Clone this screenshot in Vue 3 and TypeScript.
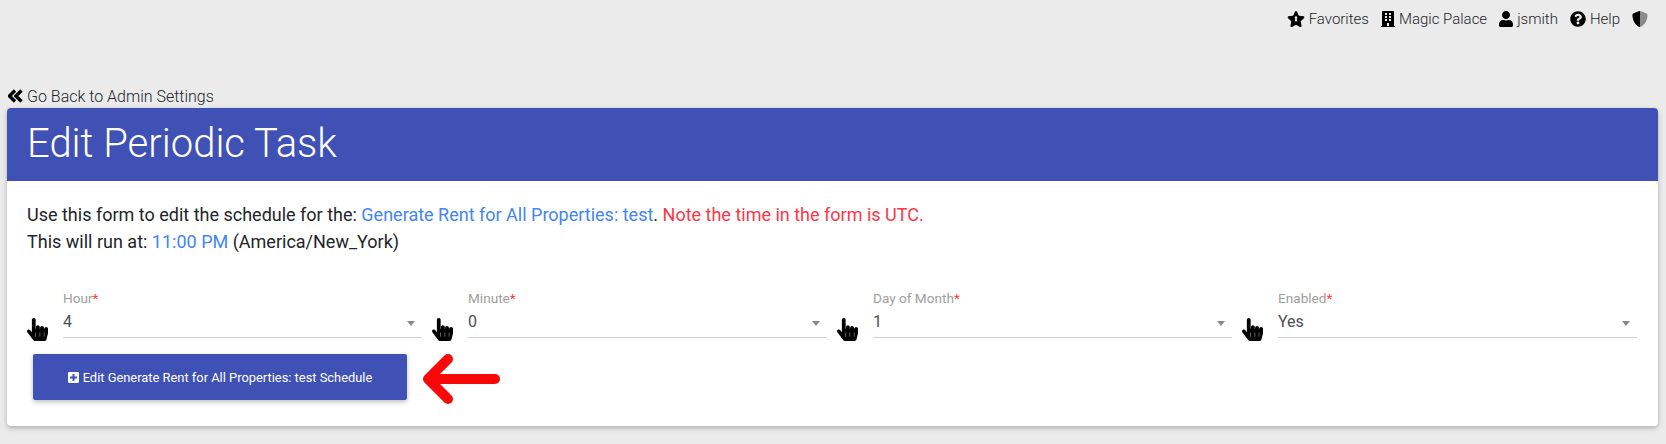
<script setup lang="ts">
interface Field {
  label: string
  value: string
}

const fields: Field[] = [
  { label: 'Hour', value: '4' },
  { label: 'Minute', value: '0' },
  { label: 'Day of Month', value: '1' },
  { label: 'Enabled', value: 'Yes' },
]

const handPath =
  'M448 240v96c0 3.084-.356 6.159-1.063 9.162l-32 136C410.686 499.23 394.562 512 376 512H168a40.004 40.004 0 0 1-32.35-16.473l-127.997-176c-12.993-17.866-9.043-42.883 8.822-55.876 17.867-12.994 42.884-9.043 55.877 8.823L104 315.992V40c0-22.091 17.908-40 40-40s40 17.909 40 40v200h8v-40c0-22.091 17.908-40 40-40s40 17.909 40 40v40h8v-24c0-22.091 17.908-40 40-40s40 17.909 40 40v24h8c0-22.091 17.908-40 40-40s40 17.909 40 40zm-256 80h-8v96h8v-96zm88 0h-8v96h8v-96zm88 0h-8v96h8v-96z'
</script>

<template>
  <div class="page">
    <nav class="topbar">
      <a class="top-link">
        <svg class="top-icon star" viewBox="0 0 576 512">
          <path d="M259.3 17.8L194 150.2 47.9 171.5c-26.2 3.8-36.7 36.1-17.7 54.6l105.7 103-25 145.5c-4.5 26.3 23.2 46 46.4 33.7L288 439.6l130.7 68.7c23.2 12.2 50.9-7.4 46.4-33.7l-25-145.5 105.7-103c19-18.5 8.5-50.8-17.7-54.6L382 150.2 316.7 17.8c-11.7-23.6-45.6-23.9-57.4 0z" />
          <path fill="#ebebeb" d="M288 170a42 42 0 0 1 24 76l14 84h-76l14-84a42 42 0 0 1 24-76z" />
        </svg>
        Favorites
      </a>
      <a class="top-link">
        <svg class="top-icon" viewBox="0 0 448 512">
          <path d="M436 480h-20V24c0-13.255-10.745-24-24-24H56C42.745 0 32 10.745 32 24v456H12c-6.627 0-12 5.373-12 12v20h448v-20c0-6.627-5.373-12-12-12zM128 76c0-6.627 5.373-12 12-12h40c6.627 0 12 5.373 12 12v40c0 6.627-5.373 12-12 12h-40c-6.627 0-12-5.373-12-12V76zm0 96c0-6.627 5.373-12 12-12h40c6.627 0 12 5.373 12 12v40c0 6.627-5.373 12-12 12h-40c-6.627 0-12-5.373-12-12v-40zm52 148h-40c-6.627 0-12-5.373-12-12v-40c0-6.627 5.373-12 12-12h40c6.627 0 12 5.373 12 12v40c0 6.627-5.373 12-12 12zm76 160h-64v-84c0-6.627 5.373-12 12-12h40c6.627 0 12 5.373 12 12v84zm64-172c0 6.627-5.373 12-12 12h-40c-6.627 0-12-5.373-12-12v-40c0-6.627 5.373-12 12-12h40c6.627 0 12 5.373 12 12v40zm0-96c0 6.627-5.373 12-12 12h-40c-6.627 0-12-5.373-12-12v-40c0-6.627 5.373-12 12-12h40c6.627 0 12 5.373 12 12v40zm0-96c0 6.627-5.373 12-12 12h-40c-6.627 0-12-5.373-12-12V76c0-6.627 5.373-12 12-12h40c6.627 0 12 5.373 12 12v40z" />
        </svg>
        Magic Palace
      </a>
      <a class="top-link">
        <svg class="top-icon" viewBox="0 0 448 512">
          <path d="M224 256c70.7 0 128-57.3 128-128S294.7 0 224 0 96 57.3 96 128s57.3 128 128 128zm89.6 32h-16.7c-22.2 10.2-46.9 16-72.9 16s-50.6-5.8-72.9-16h-16.7C60.2 288 0 348.2 0 422.4V464c0 26.5 21.5 48 48 48h352c26.5 0 48-21.5 48-48v-41.6c0-74.2-60.2-134.4-134.4-134.4z" />
        </svg>
        jsmith
      </a>
      <a class="top-link">
        <svg class="top-icon" viewBox="0 0 512 512">
          <path d="M504 256c0 136.997-111.043 248-248 248S8 392.997 8 256C8 119.083 119.043 8 256 8s248 111.083 248 248zM262.655 90c-54.497 0-89.255 22.957-116.549 63.758-3.536 5.286-2.353 12.415 2.715 16.258l34.699 26.31c5.205 3.947 12.621 3.008 16.665-2.122 17.864-22.658 30.113-35.797 57.303-35.797 20.429 0 45.698 13.148 45.698 32.958 0 14.976-12.363 22.667-32.534 33.976C247.128 238.528 216 254.941 216 296v4c0 6.627 5.373 12 12 12h56c6.627 0 12-5.373 12-12v-1.333c0-28.462 83.186-29.647 83.186-106.667 0-58.002-60.165-102-116.531-102zM256 338c-25.365 0-46 20.635-46 46 0 25.364 20.635 46 46 46s46-20.636 46-46c0-25.365-20.635-46-46-46z" />
        </svg>
        Help
      </a>
      <svg class="top-icon shield" viewBox="0 0 512 512">
        <path fill="#8a8a8a" d="M466.5 83.7l-192-80a48.15 48.15 0 0 0-36.9 0l-192 80C27.7 91.1 16 108.6 16 128c0 198.5 114.5 335.7 221.5 380.3 11.8 4.9 25.1 4.9 36.9 0C360.1 472.6 496 349.3 496 128c0-19.4-11.7-36.9-29.5-44.3z" />
        <path d="M256 0.1a48 48 0 0 0-18.4 3.6l-192 80C27.7 91.1 16 108.6 16 128c0 198.5 114.5 335.7 221.5 380.3 6 2.5 12.2 3.7 18.5 3.7z" />
      </svg>
    </nav>

    <a class="back-link">
      <svg class="back-icon" viewBox="1 0 14 14">
        <path d="M7.5 1.5 2 7l5.5 5.5M14 1.5 8.5 7l5.5 5.5" />
      </svg>
      Go Back to Admin Settings
    </a>

    <section class="card">
      <header class="card-header">
        <h1>Edit Periodic Task</h1>
      </header>
      <div class="card-body">
        <p class="intro">
          Use this form to edit the schedule for the:
          <span class="blue">Generate Rent for All Properties: test</span>.
          <span class="red">Note the time in the form is UTC.</span>
        </p>
        <p class="intro">
          This will run at: <span class="blue">11:00 PM</span> (America/New_York)
        </p>

        <div class="fields">
          <div v-for="field in fields" :key="field.label" class="field-wrap">
            <svg class="hand" viewBox="0 0 448 512" preserveAspectRatio="none">
              <path :d="handPath" />
            </svg>
            <div class="field">
              <label>{{ field.label }}<span class="req">*</span></label>
              <div class="select">
                <span>{{ field.value }}</span>
                <i class="caret"></i>
              </div>
            </div>
          </div>
        </div>

        <div class="actions">
          <button class="btn" type="button">
            <svg class="plus" viewBox="0 32 448 448">
              <path d="M400 32H48C21.5 32 0 53.5 0 80v352c0 26.5 21.5 48 48 48h352c26.5 0 48-21.5 48-48V80c0-26.5-21.5-48-48-48zm-32 252c0 6.6-5.4 12-12 12h-92v92c0 6.6-5.4 12-12 12h-56c-6.6 0-12-5.4-12-12v-92H92c-6.6 0-12-5.4-12-12v-56c0-6.6 5.4-12 12-12h92v-92c0-6.6 5.4-12 12-12h56c6.6 0 12 5.4 12 12v92h92c6.6 0 12 5.4 12 12v56z" />
            </svg>
            Edit Generate Rent for All Properties: test Schedule
          </button>
          <svg class="arrow" viewBox="0 0 80 50">
            <path d="M72 25H6M25 5 5 25l20 20" />
          </svg>
        </div>
      </div>
    </section>
  </div>
</template>

<style>
html,
body {
  margin: 0;
  background: #ebebeb;
}
</style>

<style scoped>
.page {
  height: 444px;
  box-sizing: border-box;
  padding: 0 8px 0 7px;
  overflow: hidden;
  font-family: Roboto, "Liberation Sans", sans-serif;
  color: #212529;
}

.topbar {
  display: flex;
  justify-content: flex-end;
  align-items: center;
  gap: 12px;
  height: 38px;
  padding-right: 10px;
  font-size: 15px;
  font-weight: 300;
}

.top-link {
  display: inline-flex;
  align-items: center;
  gap: 4px;
}

.top-icon {
  height: 16px;
  width: auto;
  fill: #000;
}

.back-link {
  display: flex;
  align-items: center;
  gap: 4px;
  margin-top: 46px;
  height: 24px;
  font-size: 16px;
  font-weight: 300;
}

.back-icon {
  width: 15px;
  height: 14px;
  margin-left: 1px;
  fill: none;
  stroke: #000;
  stroke-width: 3.4;
}

.card {
  background: #fff;
  border-radius: 4px;
  box-shadow: 0 2px 5px rgba(0, 0, 0, 0.26);
  overflow: hidden;
}

.card-header {
  height: 73px;
  display: flex;
  align-items: center;
  padding: 0 20px 2px;
  box-sizing: border-box;
  background: #3f51b5;
}

.card-header h1 {
  margin: 0;
  color: #fff;
  font-size: 40px;
  font-weight: 300;
}

.card-body {
  padding: 20px 20px 26px;
}

.intro {
  margin: 0;
  font-size: 18px;
  line-height: 27px;
}

.blue {
  color: #4285f4;
}

.red {
  color: #ff3547;
}

.fields {
  display: grid;
  grid-template-columns: repeat(4, 405px);
  margin-top: 36px;
}

.field-wrap {
  display: flex;
  align-items: flex-end;
  gap: 15px;
}

.hand {
  flex: none;
  width: 21px;
  height: 23px;
  fill: #000;
  margin-bottom: -3px;
}

.field {
  width: 359px;
}

.field label {
  display: block;
  font-size: 13.6px;
  line-height: 15px;
  color: #9e9e9e;
}

.req {
  color: #f44336;
}

.select {
  display: flex;
  align-items: center;
  justify-content: space-between;
  height: 31px;
  border-bottom: 1px solid #ced4da;
  font-size: 16px;
  color: #495057;
}

.caret {
  width: 0;
  height: 0;
  margin-right: 7px;
  margin-top: 4px;
  border-left: 4px solid transparent;
  border-right: 4px solid transparent;
  border-top: 5px solid #888;
}

.actions {
  display: flex;
  align-items: flex-start;
  gap: 16px;
  margin-top: 16px;
  padding-left: 6px;
}

.btn {
  display: flex;
  align-items: center;
  justify-content: center;
  gap: 4px;
  width: 374px;
  height: 46px;
  border: 0;
  border-radius: 2px;
  background: #3f51b5;
  color: #fff;
  font-family: inherit;
  font-size: 12.88px;
  box-shadow: 0 2px 5px rgba(0, 0, 0, 0.26);
}

.plus {
  width: 11px;
  height: 11px;
  fill: #fff;
}

.arrow {
  width: 80px;
  height: 50px;
  margin-bottom: -4px;
  fill: none;
  stroke: #f80808;
  stroke-width: 10;
  stroke-linecap: round;
  stroke-linejoin: round;
}
</style>
